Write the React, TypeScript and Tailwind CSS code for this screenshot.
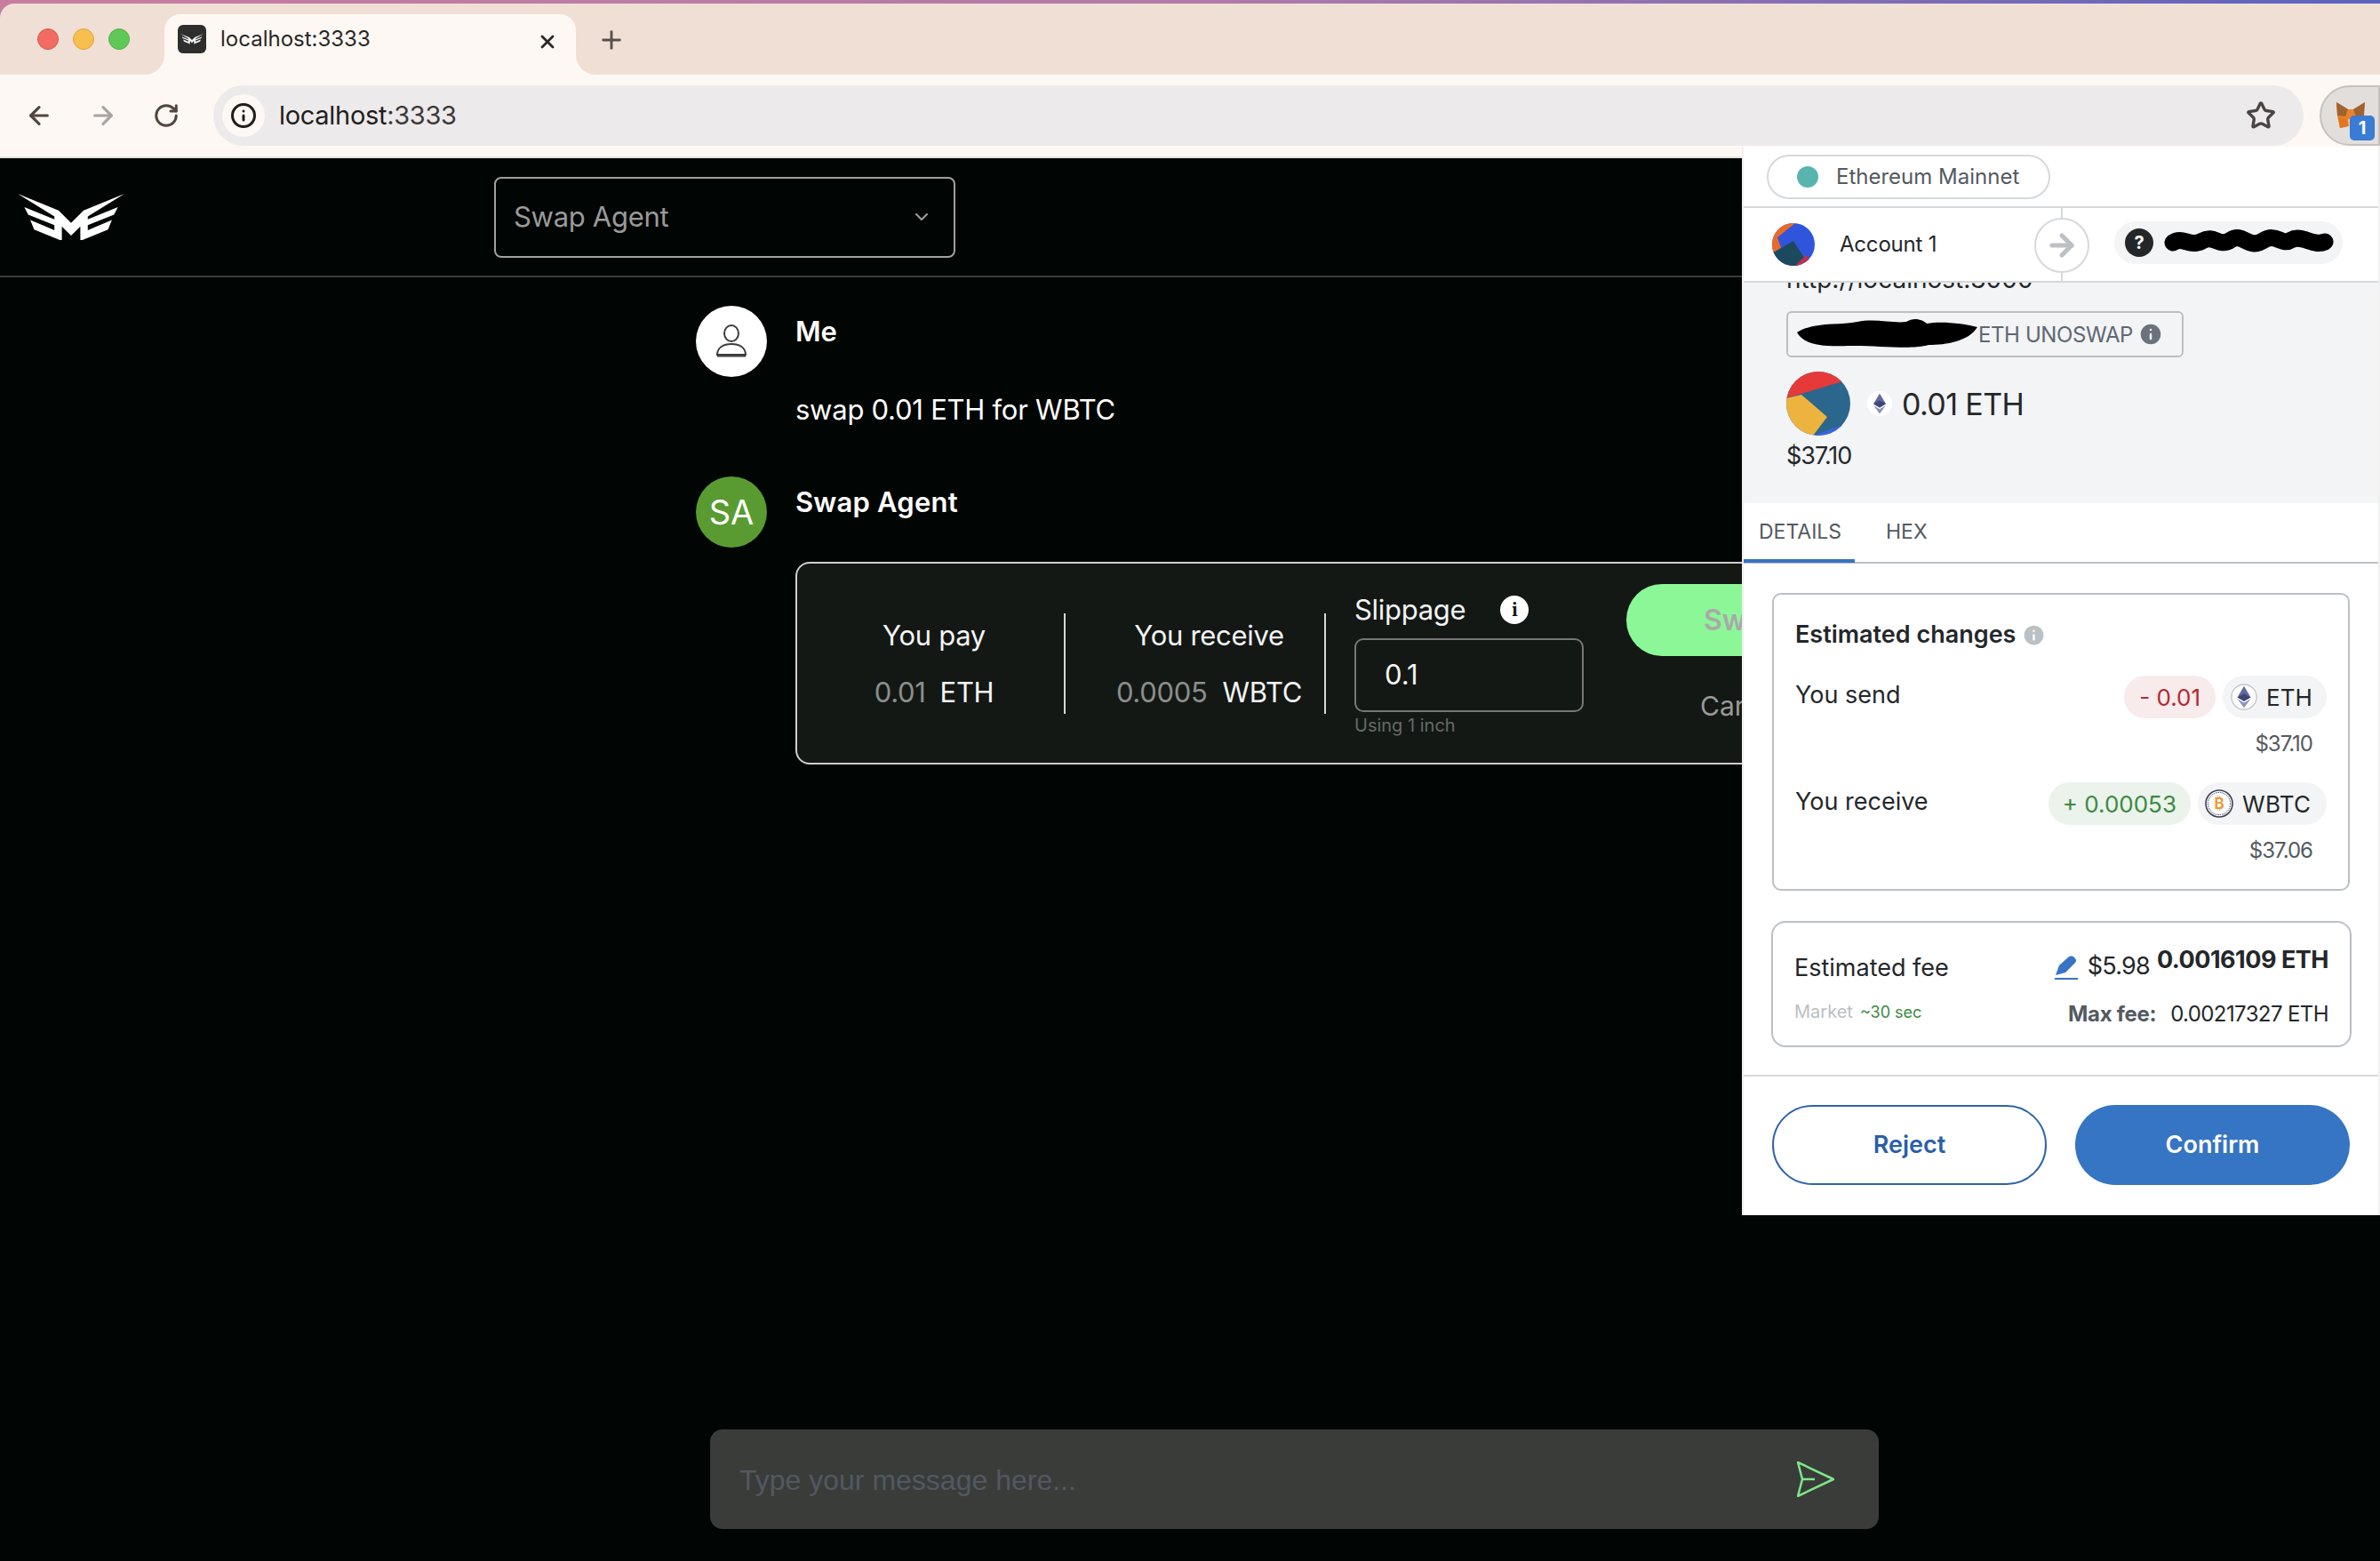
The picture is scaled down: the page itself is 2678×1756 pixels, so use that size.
import { ArrowLeft, ArrowRight, ChevronDown, Info, Plus, RotateCw, Star, X } from "lucide-react";

const wing = "M60 142L197 198L239 240V282L208 252V300L115 262L102 230L183 264V247L95 212L82 187L183 228V218Z";

const Logo = ({ className }: { className: string }) => (
  <svg viewBox="60 142 358 158" className={className} fill="currentColor">
    <path d={wing} />
    <path d={wing} transform="matrix(-1 0 0 1 478 0)" />
  </svg>
);

const EthCoin = ({ className }: { className: string }) => (
  <svg viewBox="0 0 32 32" className={className}>
    <circle cx="16" cy="16" r="15" fill="#fff" stroke="#c4c7cc" strokeWidth="1.5" />
    <path d="M16 3L8 16.4L16 21L24 16.4Z" fill="#5f6a9e" />
    <path d="M16 12L8 16.4L16 21L24 16.4Z" fill="#3f4670" />
    <path d="M8 18.4L16 29L24 18.4L16 23Z" fill="#8b93bd" />
  </svg>
);

const BtcCoin = ({ className }: { className: string }) => (
  <svg viewBox="0 0 32 32" className={className}>
    <circle cx="16" cy="16" r="15" fill="#fff" stroke="#3a3f52" strokeWidth="1.6" />
    <circle cx="16" cy="16" r="12.6" fill="none" stroke="#3a3f52" strokeWidth="1" strokeDasharray="1.5 1" />
    <text x="16" y="22" textAnchor="middle" fontSize="17" fontWeight="700" fill="#ee9a3c" fontFamily="Inter, sans-serif">
      ₿
    </text>
  </svg>
);

const Fox = () => (
  <svg viewBox="0 0 34 32" className="h-[32px] w-[34px]">
    <path d="M1 1L14 9H20L33 1L31 16L27 30L20 28H14L5 30L2 16Z" fill="#e8832b" />
    <path d="M1 1L14 9L11 17L2 16Z" fill="#a0622f" />
    <path d="M33 1L20 9L23 17L32 16Z" fill="#a0622f" />
    <path d="M5 30L14 28L12 20L3 18Z" fill="#e2761b" />
    <path d="M14 20H20L19 28H15Z" fill="#f6c89f" />
  </svg>
);

const Browser = () => (
  <div className="bg-[linear-gradient(90deg,#c87d9f,#b27aa9_50%,#5a63bf)] pt-[4px] text-[#2b2725]">
    <div className="relative flex h-[80px] rounded-tl-[16px] bg-[#f0dfd5]">
      <div className="flex w-[185px] items-center gap-[16px] pl-[42px]">
        <span className="size-[24px] rounded-full border border-[#d9584e] bg-[#f26b60]" />
        <span className="size-[24px] rounded-full border border-[#dea63a] bg-[#f6bf4f]" />
        <span className="size-[24px] rounded-full border border-[#4fb048] bg-[#60c857]" />
      </div>
      <div className="relative mt-[12px] flex h-[68px] w-[463px] items-start rounded-t-[18px] bg-[#fdf8f3] pl-[15px] pt-[12px]">
        <div className="absolute bottom-0 left-[-22px] size-[22px] bg-[#fdf8f3]">
          <div className="size-full rounded-br-[22px] bg-[#f0dfd5]" />
        </div>
        <div className="absolute bottom-0 right-[-22px] size-[22px] bg-[#fdf8f3]">
          <div className="size-full rounded-bl-[22px] bg-[#f0dfd5]" />
        </div>
        <div className="flex size-[32px] items-center justify-center rounded-[6px] bg-[#2e2e2e]">
          <Logo className="w-[26px] text-[#f2f2f2]" />
        </div>
        <span className="ml-[16px] text-[24px] leading-[32px]">localhost:3333</span>
        <X className="absolute left-[419px] top-[19px] size-[24px]" strokeWidth={2.8} />
      </div>
      <Plus className="ml-[24px] mt-[25px] size-[32px] text-[#5b514c]" strokeWidth={2.2} />
    </div>
    <div className="relative flex h-[94px] items-start border-b-2 border-[#e9e2dc] bg-[#fdf8f3] pt-[12px]">
      <div className="flex h-[68px] w-[240px] items-center gap-[40px] pl-[28px] text-[#50463f]">
        <ArrowLeft className="size-[32px]" strokeWidth={2.4} />
        <ArrowRight className="size-[32px] text-[#a8a3a0]" strokeWidth={2.4} />
        <RotateCw className="size-[30px]" strokeWidth={2.4} />
      </div>
      <div className="flex h-[68px] w-[2352px] items-center rounded-full bg-[#edeaeb] pl-[10px]">
        <div className="flex size-[48px] items-center justify-center rounded-full bg-[#fdf8f3]">
          <Info className="size-[30px] text-[#1f1d1c]" strokeWidth={2.4} />
        </div>
        <span className="ml-[16px] text-[29px] tracking-[-0.3px] text-[#3c3837]">
          <span className="text-[#1f1d1c]">localhost</span>:3333
        </span>
        <Star className="ml-auto mr-[31px] size-[34px] text-[#4a4543]" strokeWidth={2.4} />
      </div>
      <div className="relative ml-[18px] flex h-[68px] w-[68px] items-center rounded-l-full border-2 border-[#c6c2bf] bg-[#e2dedc] pl-[16px]">
        <Fox />
        <span className="absolute left-[32px] top-[32px] flex h-[28px] w-[28px] items-center justify-center rounded-[5px] bg-[#3a7bd5] text-[20px] font-bold text-white">
          1
        </span>
      </div>
    </div>
  </div>
);

const Popup = () => (
  <div className="absolute left-[1960px] top-[165px] w-[718px] border-x-2 border-[#f0f0f0] bg-white text-[#24272a] [font-family:Inter,sans-serif]">
    <div className="flex h-[69px] items-center border-b-2 border-[#d6d9dc] pl-[26px]">
      <div className="flex h-[50px] w-[319px] items-center rounded-full border-2 border-[#d6d9dc] pl-[32px]">
        <span className="size-[24px] rounded-full bg-[#59b4b0]" />
        <span className="ml-[20px] text-[24px] text-[#535a61]">Ethereum Mainnet</span>
      </div>
    </div>
    <div className="relative flex h-[84px] items-center border-b-2 border-[#d6d9dc] pl-[32px]">
      <svg viewBox="0 0 48 48" className="size-[48px]">
        <clipPath id="acc">
          <circle cx="24" cy="24" r="24" />
        </clipPath>
        <g clipPath="url(#acc)">
          <rect width="48" height="48" fill="#2f55dc" />
          <path d="M0 0H26L6 16L10 28L0 34Z" fill="#ea6a2a" />
          <path d="M0 34L24 20L38 42L30 48H0Z" fill="#1c4a5c" />
          <path d="M26 48L38 36L48 48Z" fill="#c02f4f" />
        </g>
      </svg>
      <span className="ml-[28px] text-[24px] tracking-[-0.2px]">Account 1</span>
      <div className="absolute bottom-0 left-[357px] top-0 w-[2px] bg-[#d6d9dc]" />
      <div className="absolute left-[327px] top-[11px] flex size-[62px] items-center justify-center rounded-full border-2 border-[#d6d9dc] bg-white">
        <ArrowRight className="size-[38px] text-[#bbc0c5]" strokeWidth={3.2} />
      </div>
      <div className="ml-auto mr-[40px] mt-[-4px] flex h-[48px] w-[257px] items-center rounded-full bg-[#f2f4f6] pl-[12px]">
        <span className="flex size-[32px] items-center justify-center rounded-full bg-[#24272a] text-[20px] font-bold text-white">
          ?
        </span>
        <svg viewBox="0 0 184 26" className="ml-[15px] h-[26px] w-[184px] overflow-visible">
          <path
            d="M7 13C18 5 26 19 40 11S58 19 72 10S92 21 108 11S128 17 140 10S165 18 178 12"
            fill="none"
            stroke="#000"
            strokeWidth="19"
            strokeLinecap="round"
          />
        </svg>
      </div>
    </div>
    <div className="h-[248px] overflow-hidden bg-[#f2f4f6] pl-[48px]">
      <div className="mt-[-20px] text-[28px] leading-[32px]">http://localhost:3000</div>
      <div className="mt-[20px] flex h-[52px] w-[447px] items-center rounded-[6px] border-2 border-[#bbc0c5] pl-[8px]">
        <svg viewBox="0 0 206 36" className="h-[36px] w-[206px] shrink-0">
          <path
            d="M2 16C20 4 50 8 70 4S110 6 125 4C134 -2 144 2 148 6C165 3 190 6 205 10C195 26 170 30 150 30C130 36 90 30 60 31C30 32 10 30 2 16Z"
            fill="#000"
          />
        </svg>
        <span className="mt-[1px] text-[24px] tracking-[-0.4px] text-[#5f6771]">ETH UNOSWAP</span>
        <Info className="ml-[5px] size-[30px] fill-[#6a737d] text-[#f2f4f6]" strokeWidth={2} />
      </div>
      <div className="mt-[16px] flex h-[72px] items-center">
        <svg viewBox="0 0 72 72" className="size-[72px]">
          <clipPath id="tok">
            <circle cx="36" cy="36" r="36" />
          </clipPath>
          <g clipPath="url(#tok)">
            <rect width="72" height="72" fill="#2b668c" />
            <path d="M0 0H72V8L60 12L0 30Z" fill="#e63a3a" />
            <path d="M0 30L17 26L46 51L30 72H0Z" fill="#edb33f" />
            <path d="M30 72L66 59L72 72Z" fill="#3b63e0" />
          </g>
        </svg>
        <span className="ml-[19px] flex size-[28px] items-center justify-center rounded-full bg-white">
          <EthCoin className="size-[28px] [&_circle]:stroke-white" />
        </span>
        <span className="ml-[11px] text-[34px] tracking-[-0.6px]">0.01 ETH</span>
      </div>
      <div className="mt-[5px] text-[27px] leading-[36px] tracking-[-1px]">$37.10</div>
    </div>
    <div className="flex h-[68px] border-b-2 border-[#bbc0c5] text-[23px] text-[#535a61]">
      <div className="flex h-[67px] w-[125px] items-center border-b-[4px] border-[#3873c4] pl-[17px] pt-[2px]">DETAILS</div>
      <div className="ml-[35px] flex items-center pb-[1px]">HEX</div>
    </div>
    <div className="ml-[32px] mt-[33px] h-[335px] w-[650px] rounded-[10px] border-2 border-[#bbc0c5] px-[24px] pt-[28px]">
      <div className="flex h-[34px] items-center text-[27px] font-semibold">
        Estimated changes
        <Info className="ml-[6px] size-[29px] fill-[#bbc0c5] text-white" strokeWidth={2} />
      </div>
      <div className="mt-[29px] flex h-[48px] items-center text-[26px]">
        <span className="mt-[-4px] text-[27px]">You send</span>
        <span className="ml-auto flex h-[48px] items-center rounded-full bg-[#f7ebec] px-[17px] text-[#b5282f]">- 0.01</span>
        <span className="ml-[8px] flex h-[48px] w-[117px] items-center rounded-full bg-[#f2f4f6] pl-[9px]">
          <EthCoin className="size-[30px]" />
          <span className="ml-[10px]">ETH</span>
        </span>
      </div>
      <div className="mt-[14px] pr-[16px] text-right text-[24px] leading-[30px] tracking-[-1px] text-[#535a61]">$37.10</div>
      <div className="mt-[28px] flex h-[48px] items-center text-[26px]">
        <span className="mt-[-4px] text-[27px]">You receive</span>
        <span className="ml-auto flex h-[48px] items-center rounded-full bg-[#ebf3ec] px-[16px] text-[#3b8a3f]">+ 0.00053</span>
        <span className="ml-[8px] flex h-[48px] w-[145px] items-center rounded-full bg-[#f2f4f6] pl-[8px]">
          <BtcCoin className="size-[32px]" />
          <span className="ml-[10px] tracking-[0.3px]">WBTC</span>
        </span>
      </div>
      <div className="mt-[14px] pr-[16px] text-right text-[24px] leading-[30px] tracking-[-1px] text-[#535a61]">$37.06</div>
    </div>
    <div className="ml-[31px] mt-[34px] h-[142px] w-[653px] rounded-[16px] border-2 border-[#bbc0c5] px-[24px] pt-[34px]">
      <div className="flex h-[34px] items-center text-[27px]">
        <span>Estimated fee</span>
        <svg viewBox="0 0 26 28" className="ml-auto mt-[-1px] h-[28px] w-[26px]">
          <path d="M1 22L5 11L15 2C17 0 20 0 22 2S25 6 23 8L12 19Z" fill="#3873c4" />
          <rect x="0" y="25" width="26" height="2" fill="#3873c4" />
        </svg>
        <span className="ml-[11px] mt-[-3px] tracking-[-0.8px]">$5.98</span>
        <span className="ml-[8px] mt-[-18px] font-bold tracking-[-0.5px]">0.0016109 ETH</span>
      </div>
      <div className="mt-[14px] flex h-[36px] items-center">
        <span className="text-[20px] text-[#bbc0c5]">Market</span>
        <span className="ml-[8px] text-[18px] text-[#3b8a3f]">~30 sec</span>
        <span className="ml-auto mt-[5px] text-[24px] font-bold tracking-[-0.3px] text-[#535a61]">Max fee:</span>
        <span className="ml-[16px] mt-[5px] text-[24px] tracking-[-0.6px]">0.00217327 ETH</span>
      </div>
    </div>
    <div className="mt-[31px] h-[2px] bg-[#d6d9dc]" />
    <div className="flex gap-[32px] pb-[34px] pl-[32px] pt-[32px] text-[27px] font-semibold">
      <button className="h-[90px] w-[309px] rounded-full border-2 border-[#2e63ac] pt-[1px] text-[#2a5fa8]">Reject</button>
      <button className="h-[90px] w-[309px] rounded-full bg-[#3674c4] pt-[1px] text-white">Confirm</button>
    </div>
  </div>
);

const SwapCard = () => (
  <div className="ml-[895px] mt-[16px] flex h-[228px] w-[1300px] rounded-[16px] border-2 border-[#cfcfcf] bg-[#131815] text-[#f4f4f4]">
    <div className="flex w-[300px] flex-col items-center pl-[8px] pt-[63px] text-[31px] tracking-[-0.3px]">
      <div className="leading-[36px]">You pay</div>
      <div className="mt-[28px] flex gap-[16px] leading-[36px]">
        <span className="text-[#8b8f8c]">0.01</span>
        <span>ETH</span>
      </div>
    </div>
    <div className="mt-[56px] h-[113px] w-[2px] bg-[#d8d8d8]" />
    <div className="flex w-[291px] flex-col items-center pl-[32px] pt-[63px] text-[31px] tracking-[-0.3px]">
      <div className="leading-[36px]">You receive</div>
      <div className="mt-[28px] flex gap-[17px] leading-[36px]">
        <span className="text-[#8b8f8c]">0.0005</span>
        <span>WBTC</span>
      </div>
    </div>
    <div className="mt-[56px] h-[113px] w-[2px] bg-[#d8d8d8]" />
    <div className="ml-[32px] w-[258px] pt-[32px]">
      <div className="flex h-[40px] items-center text-[31px] tracking-[-0.3px]">
        Slippage
        <span className="ml-[39px] flex size-[32px] items-center justify-center rounded-full bg-white font-serif text-[22px] font-bold text-[#131815]">
          i
        </span>
      </div>
      <div className="mt-[12px] flex h-[83px] items-center rounded-[10px] border-2 border-[#777] pl-[32px] text-[31px]">0.1</div>
      <div className="mt-[3px] text-[20px] leading-[24px] text-[#666a68]">Using 1 inch</div>
    </div>
    <div className="ml-[48px] w-[320px] pt-[23px]">
      <div className="flex h-[81px] items-center rounded-[40px] bg-[#8cf796] pl-[87px] text-[32px] font-semibold text-[#a9a9a9]">
        Swap
      </div>
      <div className="mt-[38px] pl-[83px] text-[30px] leading-[36px] text-[#9a9a9a]">Cancel</div>
    </div>
  </div>
);

const ChatPage = () => (
  <div className="flex min-h-0 flex-1 flex-col bg-[#010503] text-white [font-family:Inter,sans-serif]">
    <div className="flex h-[134px] items-center border-b-2 border-[#3a3a3e]">
      <div className="ml-[20px] w-[536px]">
        <Logo className="w-[120px] text-white" />
      </div>
      <div className="flex h-[91px] w-[519px] items-center rounded-[8px] border-2 border-[#a0a0a0] pl-[20px] text-[31px] tracking-[-0.3px] text-[#9a9a9a]">
        Swap Agent
        <ChevronDown className="ml-auto mr-[24px] size-[24px]" strokeWidth={2.2} />
      </div>
    </div>
    <div className="ml-[783px] mt-[32px] flex gap-[32px]">
      <div className="flex size-[80px] items-center justify-center rounded-full bg-white">
        <svg viewBox="0 0 40 40" className="size-[40px]" fill="none" stroke="#3d3d3d" strokeWidth="2">
          <ellipse cx="20" cy="11" rx="8" ry="9" />
          <path d="M4 35C4 27 11 23 20 23S36 27 36 35Z" />
          <path d="M4 36H36" strokeWidth="3" />
        </svg>
      </div>
      <div>
        <div className="mt-[10px] text-[31px] font-semibold leading-[38px]">Me</div>
        <div className="mt-[50px] text-[31px] leading-[38px] tracking-[-0.25px]">swap 0.01 ETH for WBTC</div>
      </div>
    </div>
    <div className="ml-[783px] mt-[56px] flex gap-[32px]">
      <div className="flex size-[80px] items-center justify-center rounded-full bg-[#599b31] text-[38px]">SA</div>
      <div className="mt-[10px] text-[31px] font-semibold leading-[38px] tracking-[0.2px]">Swap Agent</div>
    </div>
    <SwapCard />
    <div className="mb-[36px] ml-[799px] mt-auto flex h-[112px] w-[1315px] items-center rounded-[14px] bg-[#3a3c39] pl-[33px] pr-[50px]">
      <span className="pt-[2px] text-[32px] text-[#535862] [font-family:'Liberation_Sans',sans-serif]">Type your message here...</span>
      <svg viewBox="0 0 42 40" className="ml-auto h-[40px] w-[42px]" fill="none" stroke="#7ee68b" strokeWidth="2.5">
        <path d="M1 1L41 20L1 39L6 20Z" strokeLinejoin="round" />
        <path d="M6 20H20" />
      </svg>
    </div>
  </div>
);

export default function App() {
  return (
    <div className="relative flex h-[1756px] w-[2678px] flex-col overflow-hidden bg-[#010503] [font-family:Inter,sans-serif]">
      <Browser />
      <ChatPage />
      <Popup />
    </div>
  );
}
